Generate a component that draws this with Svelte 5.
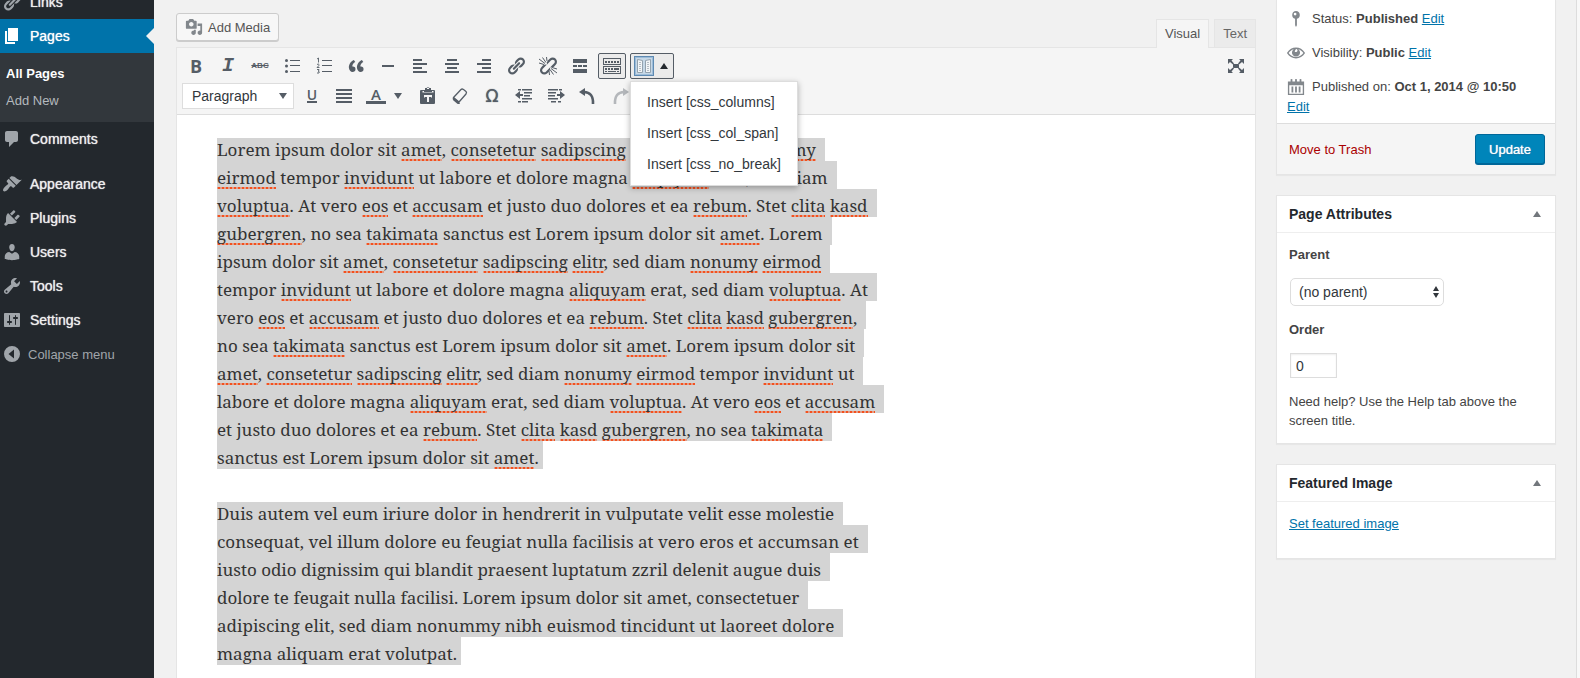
<script>
  const menuTop = [{ icon: 'link', label: 'Links' }];
  const menuRest = [
    { icon: 'brush', label: 'Appearance' },
    { icon: 'plug', label: 'Plugins' },
    { icon: 'user', label: 'Users' },
    { icon: 'wrench', label: 'Tools' },
    { icon: 'sliders', label: 'Settings' }
  ];
  const row1 = ['bold', 'italic', 'strike', 'ul', 'ol', 'quote', 'hr', 'left', 'center', 'right', 'link', 'unlink', 'more'];
  const row2 = ['paste', 'eraser', 'omega', 'outdent', 'indent', 'undo', 'redo'];
  const names = {
    bold: 'Bold', italic: 'Italic', strike: 'Strikethrough', ul: 'Bulleted list', ol: 'Numbered list',
    quote: 'Blockquote', hr: 'Horizontal line', left: 'Align left', center: 'Align center', right: 'Align right',
    link: 'Insert link', unlink: 'Remove link', more: 'Read more', paste: 'Paste as text', eraser: 'Clear formatting',
    omega: 'Special character', outdent: 'Decrease indent', indent: 'Increase indent', undo: 'Undo', redo: 'Redo'
  };
  const unknown = new Set(['amet', 'consetetur', 'sadipscing', 'elitr', 'nonumy', 'eirmod', 'invidunt', 'aliquyam', 'voluptua', 'eos', 'accusam', 'rebum', 'clita', 'kasd', 'gubergren', 'takimata']);
  const paragraphs = [
    { check: true, lines: [
      'Lorem ipsum dolor sit amet, consetetur sadipscing elitr, sed diam nonumy',
      'eirmod tempor invidunt ut labore et dolore magna aliquyam erat, sed diam',
      'voluptua. At vero eos et accusam et justo duo dolores et ea rebum. Stet clita kasd',
      'gubergren, no sea takimata sanctus est Lorem ipsum dolor sit amet. Lorem',
      'ipsum dolor sit amet, consetetur sadipscing elitr, sed diam nonumy eirmod',
      'tempor invidunt ut labore et dolore magna aliquyam erat, sed diam voluptua. At',
      'vero eos et accusam et justo duo dolores et ea rebum. Stet clita kasd gubergren,',
      'no sea takimata sanctus est Lorem ipsum dolor sit amet. Lorem ipsum dolor sit',
      'amet, consetetur sadipscing elitr, sed diam nonumy eirmod tempor invidunt ut',
      'labore et dolore magna aliquyam erat, sed diam voluptua. At vero eos et accusam',
      'et justo duo dolores et ea rebum. Stet clita kasd gubergren, no sea takimata',
      'sanctus est Lorem ipsum dolor sit amet.'
    ] },
    { check: false, lines: [
      'Duis autem vel eum iriure dolor in hendrerit in vulputate velit esse molestie',
      'consequat, vel illum dolore eu feugiat nulla facilisis at vero eros et accumsan et',
      'iusto odio dignissim qui blandit praesent luptatum zzril delenit augue duis',
      'dolore te feugait nulla facilisi. Lorem ipsum dolor sit amet, consectetuer',
      'adipiscing elit, sed diam nonummy nibh euismod tincidunt ut laoreet dolore',
      'magna aliquam erat volutpat.'
    ] }
  ];
  const pieces = (line) => line.split(/(\w+)/).filter(Boolean);
  let parent = $state('none');
  let order = $state('0');
</script>

{#snippet icon(name)}
  <svg class="ico" viewBox="0 0 20 20" aria-hidden="true">
    {#if name === 'link' || name === 'unlink'}
      <path d="M17.74 2.76c1.68 1.69 1.68 4.41 0 6.1l-1.53 1.52c-1.12 1.12-2.7 1.47-4.14 1.09l2.62-2.61.76-.77.76-.76c.84-.84.84-2.2 0-3.04-.84-.85-2.2-.85-3.04 0l-.77.76-3.38 3.38c-.37-1.44-.02-3.02 1.1-4.14l1.52-1.53c1.69-1.68 4.42-1.68 6.1 0z" />
      <path d="M7.83 15.72l4.14-4.15c.38 1.44.03 3.02-1.09 4.14l-1.52 1.53c-1.69 1.68-4.41 1.68-6.1 0-1.68-1.68-1.68-4.42 0-6.1l1.53-1.52c1.12-1.12 2.7-1.47 4.14-1.1l-4.14 4.15c-.85.84-.85 2.2 0 3.05.84.84 2.2.84 3.04 0z" />
      {#if name === 'link'}
        <path d="M8.59 13.43l5.34-5.34c.42-.42.42-1.1 0-1.52-.44-.43-1.13-.39-1.53 0l-5.33 5.34c-.42.42-.42 1.1 0 1.52.44.43 1.13.39 1.52 0z" />
      {:else}
        <path d="M1 3l6 4.500M4.500 1.500l3.500 5M8.500 1l.5 4M1 7l5 1.500M19 17l-6-4.500M15.500 18.500l-3.500-5M11.500 19l-.5-4M19 13l-5-1.500" fill="none" stroke="currentColor" stroke-width="1" />
      {/if}
    {:else if name === 'pages'}
      <path d="M6 15V2h10v13H6zm-1 1h8v2H3V5h2v11z" />
    {:else if name === 'comment'}
      <path d="M5 2h9c1.1 0 2 .9 2 2v7c0 1.1-.9 2-2 2h-2l-5 5v-5H5c-1.1 0-2-.9-2-2V4c0-1.1.9-2 2-2z" />
    {:else if name === 'brush'}
      <path d="M14.48 11.06L7.41 3.99l1.5-1.5c.5-.56 2.3-.47 3.51.32 1.21.8 1.43 1.28 2.91 2.1 1.18.64 2.45 1.26 4.45.85zm-.71.71L6.7 4.7 4.93 6.47c-.39.39-.39 1.02 0 1.41l1.06 1.06c.39.39.39 1.03 0 1.42-.6.6-1.43 1.11-2.21 1.69-.35.26-.7.53-1.01.84C1.43 14.23.4 16.08 1.4 17.07c.99 1 2.84-.03 4.18-1.36.31-.31.58-.66.85-1.02.57-.78 1.08-1.61 1.69-2.21.39-.39 1.02-.39 1.41 0l1.06 1.06c.39.39 1.02.39 1.41 0z" />
    {:else if name === 'plug'}
      <path d="M13.11 4.36L9.87 7.6 8 5.73l3.24-3.24c.35-.34 1.05-.2 1.56.32.52.51.66 1.21.31 1.55zm-8 1.77l.91-1.12 9.01 9.01-1.19.84c-.71.71-2.63 1.16-3.82 1.16H6.14L4.9 17.26c-.59.59-1.54.59-2.12 0-.59-.58-.59-1.53 0-2.12l1.24-1.24v-3.88c0-1.13.4-3.19 1.09-3.89zm7.26 3.97l3.24-3.24c.34-.35 1.04-.21 1.55.31.52.51.66 1.21.31 1.55l-3.24 3.25z" />
    {:else if name === 'user'}
      <path d="M10 9.25c-2.27 0-2.73-3.44-2.73-3.44C7 4.02 7.82 2 9.97 2c2.16 0 2.98 2.02 2.71 3.81 0 0-.41 3.44-2.68 3.44zm0 2.57L12.72 10c2.39 0 4.52 2.33 4.52 4.53v2.49s-3.65 1.13-7.24 1.13c-3.65 0-7.24-1.13-7.24-1.13v-2.49c0-2.25 1.94-4.48 4.47-4.48z" />
    {:else if name === 'wrench'}
      <path d="M16.68 9.77c-1.34 1.34-3.3 1.67-4.95.99l-5.41 6.52c-.99.99-2.59.99-3.58 0s-.99-2.59 0-3.57l6.52-5.42c-.68-1.65-.35-3.61.99-4.95 1.28-1.28 3.12-1.62 4.72-1.06l-2.89 2.89 2.82 2.82 2.86-2.87c.53 1.58.18 3.39-1.08 4.65zM3.81 16.21c.4.39 1.04.39 1.43 0 .4-.4.4-1.04 0-1.43-.39-.4-1.03-.4-1.43 0-.39.39-.39 1.03 0 1.43z" />
    {:else if name === 'sliders'}
      <path d="M18 16V4c0-.55-.45-1-1-1H3c-.55 0-1 .45-1 1v12c0 .55.45 1 1 1h14c.55 0 1-.45 1-1zM8 11h1c.55 0 1 .45 1 1s-.45 1-1 1H8v1.500c0 .28-.22.5-.5.5s-.5-.22-.5-.5V13H6c-.55 0-1-.45-1-1s.45-1 1-1h1V5.500c0-.28.22-.5.5-.5s.5.22.5.5V11zm5-2h-1c-.55 0-1-.45-1-1s.45-1 1-1h1V5.500c0-.28.22-.5.5-.5s.5.22.5.5V7h1c.55 0 1 .45 1 1s-.45 1-1 1h-1v5.500c0 .28-.22.5-.5.5s-.5-.22-.5-.5V9z" />
    {:else if name === 'collapse'}
      <path fill-rule="evenodd" d="M10 2a8 8 0 1 0 0 16a8 8 0 0 0 0-16zM12 5.500v9L6.500 10z" />
    {:else if name === 'media'}
      <path d="M13 11V4c0-.55-.45-1-1-1h-1.670L9 1H5L3.670 3H2c-.55 0-1 .45-1 1v7c0 .55.45 1 1 1h10c.55 0 1-.45 1-1zM7 4.500c1.380 0 2.500 1.120 2.500 2.500S8.380 9.500 7 9.500 4.500 8.380 4.500 7 5.620 4.500 7 4.500zM14 6h5v10.500c0 1.380-1.120 2.500-2.500 2.500S14 17.880 14 16.500s1.120-2.500 2.500-2.500c.17 0 .34.02.5.05V9h-3V6zm-4 8.050V13h2v3.500c0 1.380-1.120 2.500-2.500 2.500S7 17.880 7 16.500 8.120 14 9.500 14c.17 0 .34.02.5.05z" />
    {:else if name === 'ul' || name === 'ol'}
      <path d="M8 4h10v1H8zM8 9h10v1H8zM8 15h10v1H8z" />
      {#if name === 'ul'}
        <circle cx="4.5" cy="4.5" r="1.500" /><circle cx="4.5" cy="10" r="1.500" /><circle cx="4.5" cy="15.500" r="1.500" />
      {:else}
        <path d="M3 3l1.500-1v4.500M3 8.500q1.500-1 2 0t-2 3h2.500M3 13.500h2q.5 1-1 1.500q2 .5 1 2H3" fill="none" stroke="currentColor" stroke-width=".9" />
      {/if}
    {:else if name === 'quote'}
      <path d="M9.490 13.220c0-.74-.2-1.380-.61-1.900-.62-.78-1.830-.88-2.530-.72-.29-1.650 1.110-3.750 2.920-4.650L7.880 4c-2.730 1.300-5.420 4.280-4.960 8.050C3.210 14.430 4.590 16 6.540 16c.85 0 1.560-.25 2.120-.75s.83-1.180.83-2.030zm8.050 0c0-.74-.2-1.380-.61-1.900-.63-.78-1.830-.88-2.530-.72-.29-1.650 1.110-3.750 2.920-4.650L15.930 4c-2.730 1.300-5.410 4.280-4.950 8.050.28 2.380 1.660 3.950 3.610 3.950.85 0 1.560-.25 2.120-.75s.83-1.180.83-2.030z" />
    {:else if name === 'hr'}
      <path d="M4 9h12v2H4z" />
    {:else if name === 'left'}
      <path d="M3 3h9v2H3zM3 7h14v2H3zM3 11h9v2H3zM3 15h14v2H3z" />
    {:else if name === 'center'}
      <path d="M5 3h10v2H5zM3 7h14v2H3zM5 11h10v2H5zM3 15h14v2H3z" />
    {:else if name === 'right'}
      <path d="M8 3h9v2H8zM3 7h14v2H3zM8 11h9v2H8zM3 15h14v2H3z" />
    {:else if name === 'justify'}
      <path d="M2 3h16v2H2zM2 7h16v2H2zM2 11h16v2H2zM2 15h16v2H2z" />
    {:else if name === 'more'}
      <path d="M3 3h14v4H3zM3 9h4v2H3zM8 9h4v2H8zM13 9h4v2h-4zM3 13h14v4H3z" />
    {:else if name === 'keyboard'}
      <path fill-rule="evenodd" d="M1 2h18v7H1zM2 3v5h16V3zM1 10h18v8H1zM2 11v6h16v-6z" />
      <path d="M3 5h2v2H3zM6 5h2v2H6zM9 5h2v2H9zM12 5h2v2h-2zM15 5h2v2h-2zM3 12h2v2H3zM6 12h2v2H6zM9 12h2v2H9zM12 12h5v2h-5zM3 15h2v1H3zM6 15h8v1H6zM15 15h2v1h-2z" />
    {:else if name === 'columns'}
      <path d="M0 0h20v20H0z" fill="#5e8ab2" />
      <path d="M1 1h18v18H1z" fill="#9dbcd8" />
      <path d="M2 2h16v16H2z" fill="#c6d8e7" />
      <path d="M3.500 3.500l5 1v12h-5zM16.500 3.500l-5 1v12h5z" fill="#f2f5f7" stroke="#93a2ae" />
      <path d="M5 6.500h2M5 8.500h2M5 10.500h2M5 12.500h2M5 14.500h2M13 6.500h2M13 8.500h2M13 10.500h2M13 12.500h2M13 14.500h2" stroke="#b5bdc4" />
    {:else if name === 'paste'}
      <path fill-rule="evenodd" d="M7 2h1.500a1.800 1.800 0 0 1 3 0H13v2h3a1 1 0 0 1 1 1v12a1 1 0 0 1-1 1H3a1 1 0 0 1-1-1V5a1 1 0 0 1 1-1h4zM9 2v1h2V2zM4.500 5v1.500h11V5H14v1H6V5zM6 9v2.500h1V11h2v5h2v-5h2v.5h1V9z" />
    {:else if name === 'eraser'}
      <path d="M3.500 11.500L11 3.500q1-1 2.500 0l2.500 2q1 1 0 2.500L9 16z" fill="none" stroke="currentColor" stroke-width="1.300" stroke-linejoin="round" />
      <path d="M3 11l6 5 1 1.500q-1.500 1-3 0l-3.500-3Q2 13 3 11z" />
    {:else if name === 'outdent' || name === 'indent'}
      <path d={name === 'outdent' ? 'M1 9l5-4v3h3v2H6v3z' : 'M19 9l-5-4v3h-3v2h3v3z'} />
      <path d={name === 'outdent' ? 'M4 3h3v1.500H4zM8 3h10v1.500H8zM10 6h8v1.500h-8zM10 9h6v1.500h-6zM8 12h10v1.500H8zM8 15h6v1.500H8zM4 15h3v1.500H4z' : 'M2 3h10v1.500H2zM13 3h3v1.500h-3zM2 6h8v1.500H2zM2 9h7v1.500H2zM2 12h10v1.500H2zM5 15h5v1.500H5zM12 15h3v1.500h-3z'} />
    {:else if name === 'undo' || name === 'redo'}
      {@const left = name === 'undo'}
      <path d={left ? 'M1 6l6-4v8z' : 'M19 6l-6-4v8z'} />
      <path d={left ? 'M6 6c6 0 9.500 4 9 12' : 'M14 6c-6 0-9.500 4-9 12'} fill="none" stroke="currentColor" stroke-width="2.600" />
    {:else if name === 'expand'}
      <path d="M7 8h6v4H7zM2 3h5L5.500 4.500 8 7.500 7 8.500l-3-2.500L2 8zM18 3h-5l1.500 1.500L12 7.500l1 1 3-2.500L18 8zM2 17h5l-1.500-1.500 2.500-3-1-1-3 2.500L2 12zM18 17h-5l1.500-1.500-2.500-3 1-1 3 2.500L18 12z" />
    {:else if name === 'pin'}
      <path fill-rule="evenodd" d="M10 1a4.500 4.500 0 0 1 1 8.800V17l-1 2-1-2V9.800A4.500 4.500 0 0 1 10 1zM9 3a1.500 1.500 0 1 0 0 3A1.500 1.500 0 0 0 9 3z" />
    {:else if name === 'eye'}
      <path fill-rule="evenodd" d="M19.700 9.400C17.700 6 14 3.900 10 3.900S2.300 6 .3 9.400L0 10l.3.6c2 3.400 5.700 5.500 9.700 5.500s7.700-2.100 9.700-5.500l.3-.6-.3-.6zM10 14.500c-3.500 0-6.600-2-8.200-4.500C3.100 8 5.200 6.200 7.500 5.700A4.500 4.500 0 1 0 12.500 5.700c2.300.5 4.400 2.300 5.700 4.300-1.600 2.500-4.700 4.500-8.200 4.500zM10 5.500a1.700 1.700 0 1 1-1.500 2.500z" />
    {:else if name === 'calendar'}
      <path fill-rule="evenodd" d="M1 4h3V1.500q1-1 2 0V4h3V1.500q1-1 2 0V4h3V1.500q1-1 2 0V4h3v15H1zM2.500 8v9.500h15V8zM5 9.500h2V16H5zM9 9.500h2V16H9zM13 9.500h2V16h-2z" />
    {/if}
  </svg>
{/snippet}

{#snippet glyph(name)}
  {#if name === 'bold'}<span class="g bold">B</span>
  {:else if name === 'italic'}<span class="g italic">I</span>
  {:else if name === 'strike'}<span class="g strike">ABC</span>
  {:else if name === 'omega'}<span class="g omega">Ω</span>
  {:else}{@render icon(name)}{/if}
{/snippet}

<div class="page">
  <nav class="side" aria-label="Admin menu">
    {#each menuTop as item}
      <a class="item" href="#top">{@render icon(item.icon)}<span>{item.label}</span></a>
    {/each}
    <a class="item current" href="#top">{@render icon('pages')}<span>Pages</span></a>
    <div class="sub">
      <a class="on" href="#top">All Pages</a>
      <a href="#top">Add New</a>
    </div>
    <a class="item comments" href="#top">{@render icon('comment')}<span>Comments</span></a>
    {#each menuRest as item}
      <a class="item" href="#top">{@render icon(item.icon)}<span>{item.label}</span></a>
    {/each}
    <button class="item collapse">{@render icon('collapse')}<span>Collapse menu</span></button>
  </nav>

  <main>
    <div class="top">
      <button class="media">{@render icon('media')}Add Media</button>
      <div class="tabs">
        <button class="tab active">Visual</button>
        <button class="tab">Text</button>
      </div>
    </div>
    <div class="editor">
      <div class="toolbar">
        <div class="row">
          {#each row1 as b}<button class="tool" aria-label={names[b]}>{@render glyph(b)}</button>{/each}
          <button class="tool pressed" aria-label="Toolbar toggle">{@render icon('keyboard')}</button>
          <div class="drop">
            <button class="tool pressed wide" aria-label="Columns">{@render icon('columns')}<i class="up"></i></button>
            <div class="menu">
              <button>Insert [css_columns]</button>
              <button>Insert [css_col_span]</button>
              <button>Insert [css_no_break]</button>
            </div>
          </div>
          <button class="tool end" aria-label="Fullscreen">{@render icon('expand')}</button>
        </div>
        <div class="row">
          <button class="format">Paragraph<i class="down"></i></button>
          <button class="tool" aria-label="Underline"><span class="g under">U</span></button>
          <button class="tool" aria-label="Justify">{@render icon('justify')}</button>
          <button class="tool color" aria-label="Text color"><span class="g letter">A</span><i class="down"></i></button>
          {#each row2 as b}<button class="tool" class:off={b === 'redo'} aria-label={names[b]}>{@render glyph(b)}</button>{/each}
        </div>
      </div>
      <article>
        {#each paragraphs as p}
          <p>{#each p.lines as line}<span class="line">{#each pieces(line) as w}{#if p.check && unknown.has(w)}<span class="bad">{w}</span>{:else}{w}{/if}{/each}</span>{/each}</p>
        {/each}
      </article>
    </div>
  </main>

  <aside>
    <section class="box publish">
      <div class="fact">{@render icon('pin')}<span>Status: <b>Published</b> <a href="#top">Edit</a></span></div>
      <div class="fact">{@render icon('eye')}<span>Visibility: <b>Public</b> <a href="#top">Edit</a></span></div>
      <div class="fact">{@render icon('calendar')}<span>Published on: <b>Oct 1, 2014 @ 10:50</b></span> <a class="own" href="#top">Edit</a></div>
      <footer><a class="trash" href="#top">Move to Trash</a><button class="update">Update</button></footer>
    </section>
    <section class="box">
      <h2>Page Attributes<i class="fold"></i></h2>
      <div class="body attrs">
        <label for="parent">Parent</label>
        <div class="pick">
          <select id="parent" bind:value={parent}><option value="none">(no parent)</option></select>
          <svg viewBox="0 0 8 14" aria-hidden="true"><path d="M4 1l3 5H1zM4 13l3-5H1z" /></svg>
        </div>
        <label for="order">Order</label>
        <input id="order" type="text" bind:value={order} />
        <p>Need help? Use the Help tab above the screen title.</p>
      </div>
    </section>
    <section class="box">
      <h2>Featured Image<i class="fold"></i></h2>
      <div class="body image"><a href="#top">Set featured image</a></div>
    </section>
  </aside>
</div>

<style>
  :global(body) { background: #f1f1f1; }
  .page, .page * { box-sizing: border-box; }
  .page {
    display: flex; height: 100vh; overflow: hidden; background: #f1f1f1;
    border-right: 3px solid #f8f8f8; color: #444;
    font: 13px/19px "Liberation Sans", Arial, sans-serif;
  }
  button { font: inherit; color: inherit; border: 0; background: none; padding: 0; margin: 0; cursor: pointer; }
  .ico { width: 20px; height: 20px; fill: currentColor; flex: none; display: block; }
  a { color: #0073aa; }

  .side { flex: 0 0 154px; background: #23282d; margin-top: -15px; }
  .item { display: flex; align-items: center; gap: 8px; width: 100%; height: 34px; padding-left: 2px; color: #eee; font-size: 14px; text-decoration: none; text-shadow: 0 0 1px #eee; }
  .item .ico { color: #a0a5aa; }
  .current { background: #0073aa; color: #fff; position: relative; }
  .current .ico { color: #fff; }
  .current::after { content: ""; position: absolute; right: 0; top: 9px; border: 8px solid transparent; border-right-color: #f1f1f1; border-left: 0; }
  .sub { background: #32373c; padding: 7px 0 8px; }
  .sub a { display: block; height: 27px; line-height: 27px; padding-left: 6px; color: #b4b9be; text-decoration: none; }
  .sub .on { color: #fff; font-weight: bold; }
  .comments { margin-bottom: 11px; }
  .collapse { color: #a0a5aa; font-size: 13px; gap: 6px; text-shadow: none; }

  main { flex: 1; min-width: 0; padding-left: 22px; display: flex; flex-direction: column; }
  .top { display: flex; justify-content: space-between; height: 47px; flex: none; position: relative; z-index: 1; }
  .media { display: flex; align-items: center; gap: 5px; height: 28px; margin-top: 13px; padding: 0 8px; border: 1px solid #ccc; border-radius: 3px; background: #f7f7f7; box-shadow: 0 1px 0 #ccc; color: #555; }
  .media .ico { width: 18px; height: 18px; color: #82878c; }
  .tabs { display: flex; gap: 5px; padding-top: 19px; }
  .tab { height: 28px; padding: 0 8px; border: 1px solid #e5e5e5; border-bottom: 0; background: #ebebeb; color: #666; }
  .tab.active { height: 29px; padding-bottom: 2px; background: #f5f5f5; color: #555; }

  .editor { flex: 1; border: 1px solid #e5e5e5; background: #fff; }
  .toolbar { background: #f5f5f5; border-bottom: 1px solid #ddd; padding: 5px; }
  .row { display: flex; gap: 4px; height: 26px; color: #555d66; }
  .row + .row { margin-top: 4px; }
  .tool { width: 28px; height: 26px; display: flex; align-items: center; justify-content: center; border-radius: 2px; color: #555d66; }
  .pressed { border: 1px solid #555d66; background: #ebebeb; }
  .wide { width: 44px; gap: 6px; padding-right: 2px; }
  .end { margin-left: auto; }
  .color { width: 48px; gap: 8px; padding-right: 4px; }
  .off { opacity: .4; }
  .g { line-height: 20px; }
  .bold { font: bold 18px/20px "Open Sans", sans-serif; }
  .italic { font: italic bold 20px/20px "Liberation Mono", monospace; }
  .strike { font-size: 8px; font-weight: bold; text-decoration: line-through; }
  .omega { font: 17px/20px "DejaVu Sans", sans-serif; text-shadow: 0 0 1px #555d66; }
  .under { font: 600 14px/12px "Open Sans", sans-serif; border-bottom: 2px solid; }
  .letter { font: 600 15px/13px "Open Sans", sans-serif; border-bottom: 3px solid; width: 20px; }
  .down { border: 4px solid transparent; border-top: 6px solid #555d66; border-bottom: 0; }
  .up { border: 4px solid transparent; border-bottom: 6px solid #23282d; border-top: 0; }
  .format { width: 112px; display: flex; align-items: center; justify-content: space-between; padding: 0 6px 0 9px; background: #fff; border: 1px solid #ddd; color: #32373c; font-size: 14px; }
  .drop { position: relative; }
  .menu { position: absolute; z-index: 5; top: 28px; left: 0; width: max-content; padding: 5px 0; background: #fff; border: 1px solid #ddd; box-shadow: 0 2px 6px rgba(0, 0, 0, .3); }
  .menu button { display: block; width: 100%; height: 31px; padding: 0 16px; text-align: left; font-size: 14px; color: #32373c; }

  article { padding: 23px 40px 0; color: #333; font: 17px/20px "Noto Serif", "Droid Serif", "DejaVu Serif Condensed", "DejaVu Serif", serif; }
  article p { margin: 0 0 33px; }
  .line { display: block; width: fit-content; white-space: nowrap; padding: 7px 9px 1px 0; background: #d4d4d4; }
  .line:first-child { padding-top: 2px; }
  .line:last-child { padding-right: 4px; }
  .bad { background: radial-gradient(circle at 2px 1px, #f4511e 1px, transparent 2px) left bottom / 4px 2px repeat-x; }

  aside { flex: 0 0 321px; padding: 0 20px; border-right: 1px solid #ddd; }
  .box { background: #fff; border: 1px solid #e5e5e5; box-shadow: 0 1px 1px rgba(0, 0, 0, .04); margin-bottom: 20px; }
  .publish { border-top: 0; padding-top: 1px; }
  .fact { display: flex; flex-wrap: wrap; align-items: center; padding: 8px 10px 7px; gap: 1px 7px; }
  .fact .ico { width: 18px; height: 18px; color: #82878c; }
  .own { flex-basis: 100%; }
  footer { display: flex; justify-content: space-between; align-items: center; height: 51px; padding: 0 10px 0 12px; background: #f5f5f5; border-top: 1px solid #ddd; }
  .trash { color: #a00; text-decoration: none; }
  .update { width: 70px; height: 30px; background: #0085ba; border: 1px solid #006799; border-radius: 3px; box-shadow: 0 1px 0 #006799; color: #fff; text-shadow: 0 0 1px #fff, 0 1px 1px #006799; }
  h2 { display: flex; justify-content: space-between; align-items: center; height: 37px; margin: 0; padding: 0 14px 0 12px; border-bottom: 1px solid #eee; color: #23282d; font-size: 14px; }
  .fold { border: 4px solid transparent; border-bottom: 6px solid #72777c; border-top: 0; }
  .body { padding: 12px; }
  label { display: block; font-weight: bold; }
  .pick { position: relative; width: max-content; margin: 14px 0; }
  .pick svg { position: absolute; right: 4px; top: 7px; width: 8px; height: 14px; fill: #32373c; pointer-events: none; }
  select { appearance: none; display: block; width: 154px; height: 28px; margin-left: 1px; padding: 0 20px 0 8px; border: 1px solid #ddd; border-radius: 5px; background: #fff; color: #32373c; font: 14px "Liberation Sans", Arial, sans-serif; }
  input { display: block; width: 47px; height: 25px; margin: 14px 0 14px 1px; padding: 0 5px; border: 1px solid #ddd; background: #fff; color: #32373c; font: 14px "Liberation Sans", Arial, sans-serif; box-shadow: inset 0 1px 2px rgba(0, 0, 0, .07); }
  .attrs { padding-bottom: 13px; }
  .attrs p { margin: 0; }
  .image { padding-bottom: 25px; }
</style>
